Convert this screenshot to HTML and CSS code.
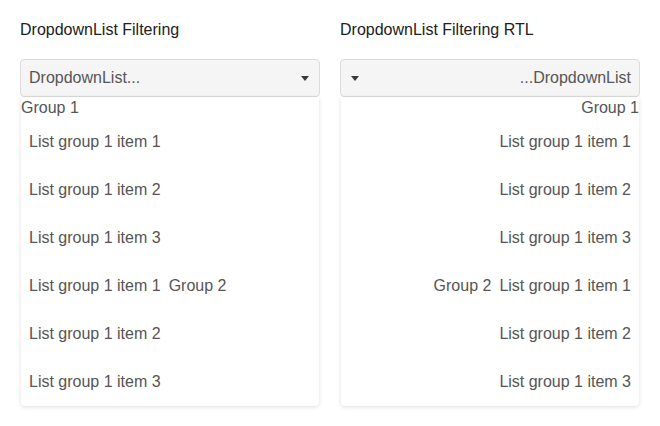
FILE: index.html
```html
<!DOCTYPE html>
<html>
<head>
<meta charset="utf-8">
<link rel="stylesheet" href="styles.css">
</head>
<body>
<div class="page">
  <section class="demo">
    <h2 class="title">DropdownList Filtering</h2>
    <div class="dropdown">
      <span class="value">DropdownList...</span>
      <span class="arrow"></span>
    </div>
    <div class="popup">
      <div class="group">Group 1</div>
      <div class="item">List group 1 item 1</div>
      <div class="item">List group 1 item 2</div>
      <div class="item">List group 1 item 3</div>
      <div class="item"><span>List group 1 item 1</span><span class="group-inline">Group 2</span></div>
      <div class="item">List group 1 item 2</div>
      <div class="item">List group 1 item 3</div>
    </div>
  </section>
  <section class="demo">
    <h2 class="title">DropdownList Filtering RTL</h2>
    <div dir="rtl">
      <div class="dropdown">
        <span class="value">DropdownList...</span>
        <span class="arrow"></span>
      </div>
      <div class="popup">
        <div class="group">Group 1</div>
        <div class="item">List group 1 item 1</div>
        <div class="item">List group 1 item 2</div>
        <div class="item">List group 1 item 3</div>
        <div class="item"><span>List group 1 item 1</span><span class="group-inline">Group 2</span></div>
        <div class="item">List group 1 item 2</div>
        <div class="item">List group 1 item 3</div>
      </div>
    </div>
  </section>
</div>
</body>
</html>
```
FILE: styles.css
```css
html, body {
  margin: 0;
  padding: 0;
  background: #ffffff;
  font-family: "Liberation Sans", Arial, sans-serif;
}
.page {
  display: flex;
  gap: 20px;
  padding: 20px;
}
.demo {
  width: 300px;
}
.title {
  margin: 0 0 19px 0;
  font-size: 16px;
  font-weight: normal;
  line-height: 20px;
  color: #212121;
}
.dropdown {
  display: flex;
  align-items: center;
  justify-content: space-between;
  height: 38px;
  box-sizing: border-box;
  border: 1px solid #dcdcdc;
  border-radius: 4px;
  background: #f5f5f5;
  padding: 0 10px 0 8px;
  font-size: 16px;
  color: #555555;
}
[dir="rtl"] .dropdown {
  padding: 0 8px 0 10px;
}
.arrow {
  width: 0;
  height: 0;
  border-left: 4px solid transparent;
  border-right: 4px solid transparent;
  border-top: 5px solid #3a3a3a;
  margin-top: 1px;
}
.popup {
  margin: 0 1px;
  background: #ffffff;
  border-radius: 0 0 4px 4px;
  box-shadow: 0 1px 4px rgba(0, 0, 0, 0.13);
  font-size: 16px;
  color: #555555;
}
.group {
  height: 20px;
  line-height: 20px;
  padding-top: 1px;
}
.item {
  display: flex;
  gap: 8px;
  height: 48px;
  align-items: center;
  padding: 0 8px;
}
```
